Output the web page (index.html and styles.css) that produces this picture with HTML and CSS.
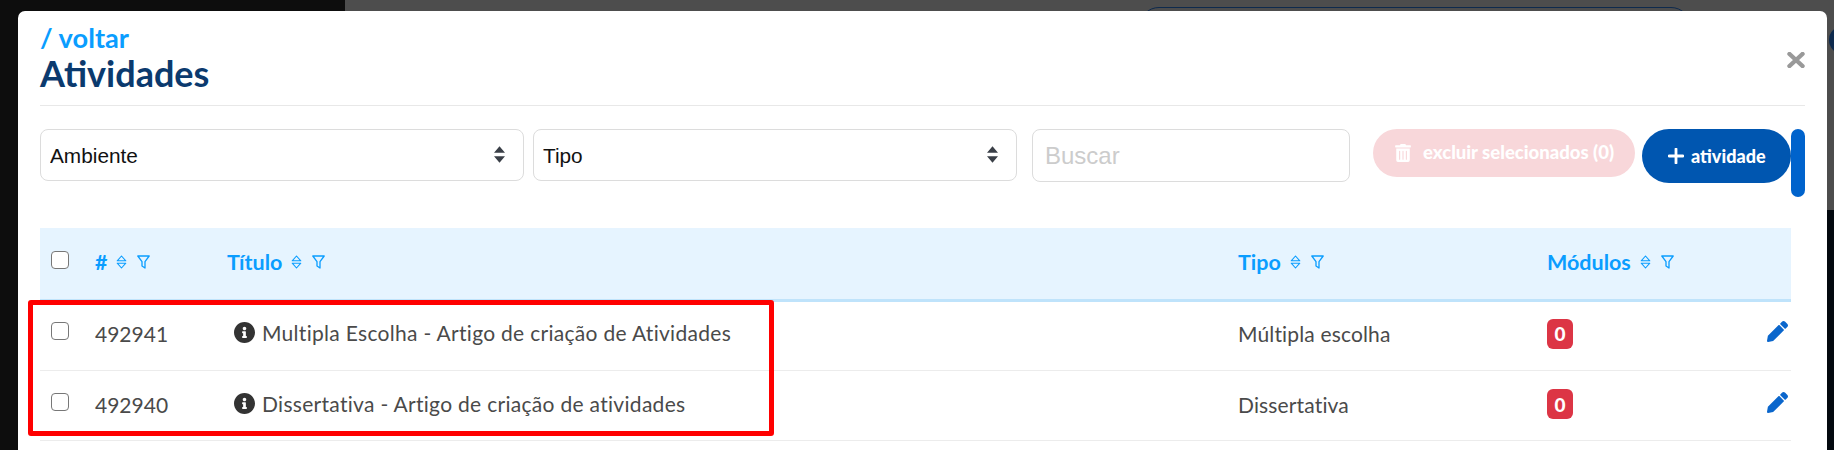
FILE: index.html
```html
<!DOCTYPE html>
<html lang="pt-BR">
<head>
<meta charset="utf-8">
<title>Atividades</title>
<link rel="stylesheet" href="styles.css">
</head>
<body>
<svg width="0" height="0" class="defs">
  <symbol id="sort" viewBox="0 0 11 14"><path d="M5.5 1 L9.8 5.8 H1.2 Z M1.2 8.2 H9.8 L5.5 13 Z" fill="none" stroke="currentColor" stroke-width="1.1" stroke-linejoin="round"/></symbol>
  <symbol id="filter" viewBox="0 0 13 14"><path d="M.8 1 H12.2 L8 6.6 V13 L5 11 V6.6 Z" fill="none" stroke="currentColor" stroke-width="1.3" stroke-linejoin="round"/></symbol>
  <symbol id="info" viewBox="8 8 496 496"><path fill="currentColor" d="M256 8C119.043 8 8 119.083 8 256c0 136.997 111.043 248 248 248s248-111.003 248-248C504 119.083 392.957 8 256 8zm0 110c23.196 0 42 18.804 42 42s-18.804 42-42 42-42-18.804-42-42 18.804-42 42-42zm56 254c0 6.627-5.373 12-12 12h-88c-6.627 0-12-5.373-12-12v-24c0-6.627 5.373-12 12-12h12v-64h-12c-6.627 0-12-5.373-12-12v-24c0-6.627 5.373-12 12-12h64c6.627 0 12 5.373 12 12v100h12c6.627 0 12 5.373 12 12v24z"/></symbol>
  <symbol id="pen" viewBox="0 0 512 512"><path fill="currentColor" d="M497.9 142.1l-46.1 46.1c-4.7 4.7-12.3 4.7-17 0l-111-111c-4.7-4.7-4.7-12.3 0-17l46.1-46.1c18.7-18.7 49.1-18.7 67.9 0l60.1 60.1c18.8 18.7 18.8 49.1 0 67.9zM284.2 99.8L21.6 362.4.4 483.9c-2.9 16.4 11.4 30.6 27.8 27.8l121.5-21.3 262.6-262.6c4.7-4.7 4.7-12.3 0-17l-111-111c-4.8-4.7-12.4-4.7-17.1 0z"/></symbol>
  <symbol id="updown" viewBox="0 0 12 18"><path fill="currentColor" d="M6 0 L12 7 H0 Z M0 11 H12 L6 18 Z"/></symbol>
</svg>

<div class="backdrop-gray"></div>
<div class="backdrop-pill"></div>
<div class="backdrop-circle"></div>
<div class="backdrop-right"></div>

<main class="modal">
  <header class="modal-header">
    <div class="titles">
      <a class="back">/ voltar</a>
      <h1 class="title">Atividades</h1>
    </div>
    <button class="close" aria-label="Fechar">
      <svg viewBox="0 0 18 16" width="18" height="16"><path d="M2.5 2 L15.5 14 M15.5 2 L2.5 14" stroke="currentColor" stroke-width="4.4" stroke-linecap="round"/></svg>
    </button>
  </header>

  <div class="toolbar">
    <div class="select-wrap wide">
      <select class="select"><option>Ambiente</option></select>
      <svg class="select-arrows"><use href="#updown"/></svg>
    </div>
    <div class="select-wrap wide">
      <select class="select"><option>Tipo</option></select>
      <svg class="select-arrows"><use href="#updown"/></svg>
    </div>
    <input class="search" type="text" placeholder="Buscar">
    <button class="btn-delete">
      <svg viewBox="0 0 448 512" width="16" height="18"><path fill="currentColor" d="M32 464a48 48 0 0 0 48 48h288a48 48 0 0 0 48-48V128H32zm272-256a16 16 0 0 1 32 0v224a16 16 0 0 1-32 0zm-96 0a16 16 0 0 1 32 0v224a16 16 0 0 1-32 0zm-96 0a16 16 0 0 1 32 0v224a16 16 0 0 1-32 0zM432 32H312l-9.4-18.7A24 24 0 0 0 281.1 0H166.8a23.72 23.72 0 0 0-21.4 13.3L136 32H16A16 16 0 0 0 0 48v32a16 16 0 0 0 16 16h416a16 16 0 0 0 16-16V48a16 16 0 0 0-16-16z"/></svg>
      <span>excluir selecionados (0)</span>
    </button>
    <button class="btn-add">
      <svg viewBox="0 0 16 16" width="16" height="16"><path d="M8 1 V15 M1 8 H15" stroke="currentColor" stroke-width="2.8" stroke-linecap="round"/></svg>
      <span>atividade</span>
    </button>
    <div class="btn-stub"></div>
  </div>

  <div class="table-wrap">
    <table class="table">
      <colgroup><col class="c-check"><col class="c-id"><col class="c-title"><col class="c-type"><col class="c-mod"><col></colgroup>
      <thead>
        <tr>
          <th><input class="check" type="checkbox"></th>
          <th><span class="th-in">#<svg class="i-sort"><use href="#sort"/></svg><svg class="i-filter"><use href="#filter"/></svg></span></th>
          <th><span class="th-in">Título<svg class="i-sort"><use href="#sort"/></svg><svg class="i-filter"><use href="#filter"/></svg></span></th>
          <th><span class="th-in">Tipo<svg class="i-sort"><use href="#sort"/></svg><svg class="i-filter"><use href="#filter"/></svg></span></th>
          <th><span class="th-in">Módulos<svg class="i-sort"><use href="#sort"/></svg><svg class="i-filter"><use href="#filter"/></svg></span></th>
          <th></th>
        </tr>
      </thead>
      <tbody>
        <tr class="row-first">
          <td><input class="check" type="checkbox"></td>
          <td>492941</td>
          <td><span class="name"><svg class="i-info"><use href="#info"/></svg>Multipla Escolha - Artigo de criação de Atividades</span></td>
          <td class="kind">Múltipla escolha</td>
          <td><span class="badge">0</span></td>
          <td class="act"><svg class="i-pen"><use href="#pen"/></svg></td>
        </tr>
        <tr class="row-second">
          <td><input class="check" type="checkbox"></td>
          <td>492940</td>
          <td><span class="name"><svg class="i-info"><use href="#info"/></svg>Dissertativa - Artigo de criação de atividades</span></td>
          <td class="kind">Dissertativa</td>
          <td><span class="badge">0</span></td>
          <td class="act"><svg class="i-pen"><use href="#pen"/></svg></td>
        </tr>
      </tbody>
    </table>
    <div class="highlight"></div>
  </div>
</main>
</body>
</html>
```

FILE: styles.css
```css
* { box-sizing: border-box; }
html, body { height: 450px; }
body {
  margin: 0;
  overflow: hidden;
  position: relative;
  background: #0d0d0d;
  font-family: Lato, "Noto Sans", sans-serif;
  color: #444;
}
.defs { position: absolute; }
.backdrop-gray {
  position: absolute;
  left: 345px; top: 0; right: 0;
  height: 210px;
  background: #4d4d4d;
}
.backdrop-pill {
  position: absolute;
  left: 1139px; top: 7px;
  width: 552px; height: 40px;
  border: 1px solid #0e2a4d;
  border-radius: 20px;
  background: #4d4d4d;
}
.backdrop-circle {
  position: absolute;
  left: 1829px; top: 26px;
  width: 28px; height: 28px;
  border-radius: 50%;
  background: #0e2a4d;
}
.backdrop-right {
  position: absolute;
  left: 1827px; top: 210px; right: 0; bottom: 0;
  background: #03090f;
}
.modal {
  position: relative;
  margin: 11px 7px 0 18px;
  height: 439px;
  padding: 0 22px;
  background: #fff;
  border-radius: 7px 7px 0 0;
}
.modal-header {
  display: flex;
  justify-content: space-between;
  align-items: center;
  height: 95px;
  border-bottom: 1px solid #e8e8e8;
}
.titles { display: flex; flex-direction: column; }
.back {
  font-size: 27.2px;
  line-height: 30px;
  font-weight: 700;
  color: #0a9dff;
}
.title {
  margin: 0;
  font-size: 36px;
  line-height: 41px;
  font-weight: 700;
  color: #0b3a6e;
}
.close {
  border: 0;
  background: none;
  padding: 0;
  color: #999;
  display: flex;
  margin-top: 3px;
}
.toolbar {
  display: flex;
  align-items: flex-start;
  margin-top: 23px;
}
.select-wrap { position: relative; margin-right: 9px; }
.select-wrap + .select-wrap { margin-right: 15px; }
.wide { width: 484px; }
.select {
  appearance: none;
  display: block;
  width: 100%;
  height: 52px;
  padding: 0 9px;
  border: 1px solid #dcdcdc;
  border-radius: 8px;
  background: #fff;
  font-family: "Liberation Sans", Arial, sans-serif;
  font-size: 20.8px;
  color: #111;
}
.select-arrows {
  position: absolute;
  right: 19px; top: 17px;
  width: 11px; height: 17px;
  color: #3a3f47;
}
.search {
  width: 318px;
  height: 53px;
  padding: 0 12px;
  border: 1px solid #dcdcdc;
  border-radius: 8px;
  font-family: "Liberation Sans", Arial, sans-serif;
  font-size: 24px;
}
.search::placeholder { color: #ccc; opacity: 1; }
.btn-delete, .btn-add {
  display: flex;
  align-items: center;
  border: 0;
  font-family: inherit;
  font-weight: 900;
  color: #fff;
  white-space: nowrap;
}
.btn-delete {
  width: 262px;
  height: 48px;
  margin-left: 23px;
  padding: 0 0 0 22px;
  border-radius: 24px;
  background: #f8d7da;
  font-size: 18.5px;
}
.btn-delete span { margin-left: 12px; margin-top: -2px; }
.btn-add {
  width: 149px;
  height: 54px;
  margin-left: 7px;
  padding: 0 0 0 26px;
  border-radius: 27px;
  background: #0056b0;
  font-size: 18px;
}
.btn-add span { margin-left: 7px; }
.btn-stub {
  width: 14px;
  height: 68px;
  border-radius: 7px;
  background: #0063cc;
}
.table-wrap {
  position: relative;
  margin-top: 31px;
  margin-right: 14px;
}
.table {
  width: 100%;
  table-layout: fixed;
  border-collapse: collapse;
}
.c-check { width: 55px; }
.c-id { width: 132px; }
.c-title { width: 1011px; }
.c-type { width: 309px; }
.c-mod { width: 200px; }
th, td { padding: 0; vertical-align: middle; text-align: left; }
th {
  height: 72px;
  background: #e6f4ff;
  border-bottom: 3px solid #bfe3fb;
  font-size: 21.5px;
  font-weight: 700;
  color: #0a9dff;
}
td {
  height: 70px;
  border-bottom: 1px solid #ececec;
  font-size: 21px;
  color: #4a4a4a;
}
.row-first td { padding-bottom: 4px; }
.row-second td { padding-bottom: 2px; }
th:first-child, td:first-child { padding-left: 11px; }
.check {
  appearance: none;
  display: block;
  width: 18px;
  height: 18px;
  margin: 0 0 5px;
  border: 1.5px solid #777;
  border-radius: 4px;
  background: #fff;
}
th .check { margin-bottom: 7px; }
.kind { letter-spacing: 0.15px; }
.th-in { display: inline-flex; align-items: center; position: relative; top: -1px; }
.i-sort { width: 11px; height: 14px; margin-left: 9px; color: #0a9dff; }
.i-filter { width: 13px; height: 14px; margin-left: 10px; color: #0a9dff; }
.name { display: inline-flex; align-items: center; margin-left: 7px; letter-spacing: 0.3px; }
.i-info { width: 21px; height: 21px; margin-right: 7px; color: #333; }
.badge {
  display: inline-flex;
  align-items: center;
  justify-content: center;
  width: 26px;
  height: 30px;
  border-radius: 6px;
  background: #dc3545;
  color: #fff;
  font-weight: 900;
  font-size: 19px;
}
.act { text-align: right; padding-right: 3px; }
.i-pen { display: block; margin: 0 0 4px auto; width: 21px; height: 21px; color: #0a66cc; }
.highlight {
  position: absolute;
  left: -12px; top: 72px;
  width: 746px; height: 136px;
  border: 5px solid #f00;
  border-radius: 3px;
  pointer-events: none;
}
```
